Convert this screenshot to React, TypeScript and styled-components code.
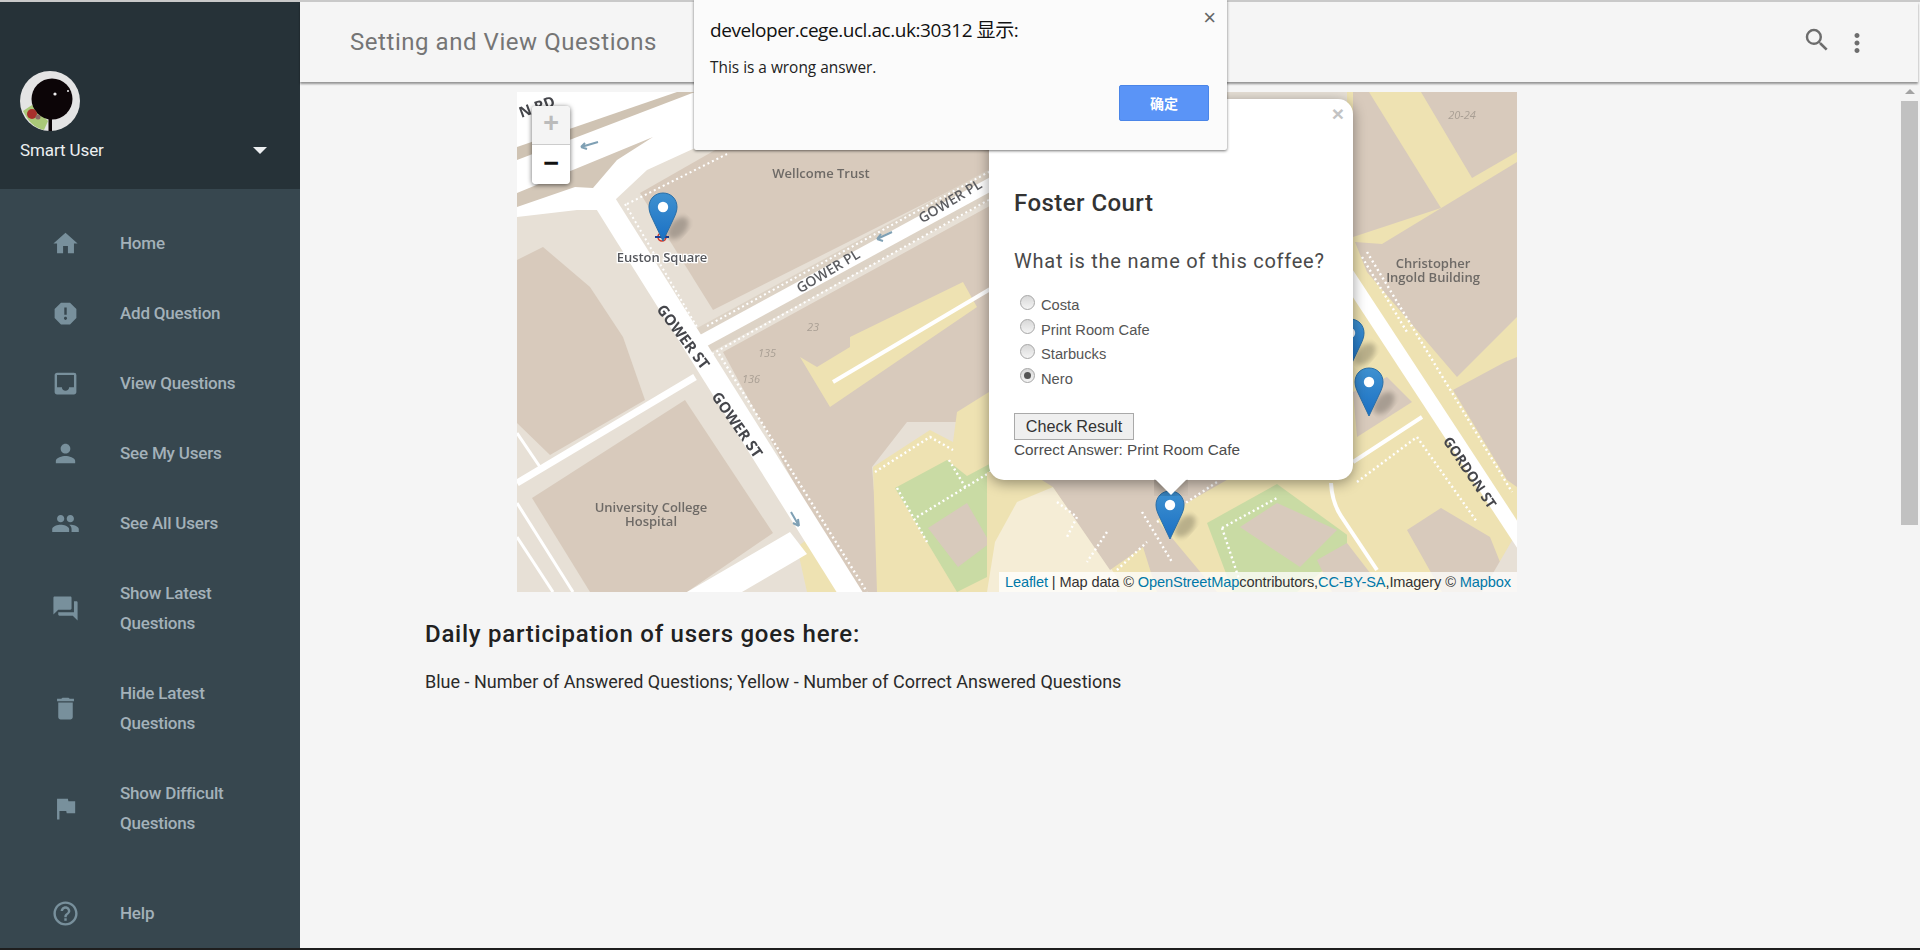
import React from "react";
import styled, { createGlobalStyle } from "styled-components";
import { MdHome, MdReport, MdInbox, MdPerson, MdPeople, MdForum, MdDelete, MdFlag, MdHelpOutline, MdSearch, MdMoreVert } from "react-icons/md";

const Global = createGlobalStyle`
  html, body { margin: 0; padding: 0; height: 950px; overflow: hidden; background: #f5f5f5; }
  * { box-sizing: border-box; }
  body { font-family: Roboto, "Noto Sans CJK SC", sans-serif; }
`;

const Page = styled.div`
  position: relative;
  height: 950px;
  display: flex;
  flex-direction: column;
  border-top: 2px solid #c9c9c9;
  border-bottom: 2px solid #1e1e1e;
`;
const Shell = styled.div`flex: 1; display: flex; min-height: 0;`;

const Sidebar = styled.aside`
  width: 300px;
  flex: none;
  display: flex;
  flex-direction: column;
  background: #37474f;
`;
const Account = styled.div`
  height: 189px;
  background: #263238;
  padding: 69px 20px 0;
  color: #eceff1;
`;
const Avatar = styled.svg`display: block; width: 60px; height: 60px;`;
const AccountRow = styled.div`
  display: flex;
  align-items: center;
  justify-content: space-between;
  height: 30px;
  margin-top: 4px;
  font-size: 17px;
  letter-spacing: -0.1px;
`;
const Caret = styled.span`
  width: 0; height: 0;
  margin-right: 13px;
  border-left: 7px solid transparent;
  border-right: 7px solid transparent;
  border-top: 7px solid #eceff1;
`;
const Nav = styled.nav`flex: 1; display: flex; flex-direction: column; padding-top: 19px;`;
const NavItem = styled.div<{ $gap?: number }>`
  display: flex;
  align-items: center;
  padding: 20px 40px 20px 51px;
  margin-top: ${(p) => p.$gap ?? 0}px;
  color: #a3b1b9;
  font-size: 17px;
  font-weight: 500;
  line-height: 30px;
  letter-spacing: -0.2px;
  svg { flex: none; width: 29px; height: 29px; color: #78909c; margin-right: 40px; }
`;

const Main = styled.div`flex: 1; min-width: 0; display: flex; flex-direction: column;`;
const Header = styled.header`
  position: relative;
  z-index: 1;
  height: 80px;
  flex: none;
  margin-right: 2px;
  display: flex;
  align-items: center;
  justify-content: space-between;
  padding: 0 47px 0 50px;
  background: #f5f5f5;
  box-shadow: 0 2px 2px rgba(0, 0, 0, 0.4);
`;
const Title = styled.h1`
  margin: 0;
  font-size: 24px;
  font-weight: 400;
  letter-spacing: 0.55px;
  color: #757575;
`;
const Tools = styled.div`
  display: flex;
  align-items: center;
  gap: 10px;
  color: #6d6d6d;
  margin-top: -4px;
  svg { display: block; width: 30px; height: 30px; }
`;
const Dots = styled.span`display: block; margin-top: 6px; margin-right: -1px;`;
const Body = styled.div`flex: 1; min-height: 0; display: flex;`;
const Content = styled.main`flex: 1; padding: 10px 0 0 125px; background: #f5f5f5;`;
const MapBox = styled.div`
  position: relative;
  width: 1000px;
  height: 500px;
  margin-left: 92px;
  overflow: hidden;
`;
const MapArt = styled.svg`display: block; width: 1000px; height: 500px; filter: blur(0.35px);`;
const Heading = styled.h2`
  margin: 27px 0 0;
  font-size: 24px;
  line-height: 30px;
  font-weight: 500;
  letter-spacing: 0.75px;
  color: #212121;
`;
const Para = styled.p`
  margin: 18px 0 0;
  font-size: 18px;
  line-height: 30px;
  color: #2a2a2a;
`;

const ScrollTrack = styled.div`
  width: 20px;
  flex: none;
  padding: 4px 2px 0 1px;
  background: #f4f4f4;
`;
const ScrollArrow = styled.div`
  width: 0; height: 0;
  margin: 3px auto 7px;
  border-left: 5px solid transparent;
  border-right: 5px solid transparent;
  border-bottom: 5px solid #a3a3a3;
`;
const ScrollThumb = styled.div`height: 424px; background: #c1c1c1;`;

const Zoom = styled.div`
  position: absolute;
  left: 15px;
  top: 14px;
  width: 38px;
  border-radius: 4px;
  overflow: hidden;
  box-shadow: 0 1px 5px rgba(0, 0, 0, 0.6);
`;
const ZoomBtn = styled.div<{ $off?: boolean }>`
  height: 39px;
  display: flex;
  align-items: center;
  justify-content: center;
  font-family: "Liberation Mono", monospace;
  font-weight: 700;
  font-size: 27px;
  color: ${(p) => (p.$off ? "#bbb" : "#111")};
  background: ${(p) => (p.$off ? "#f4f4f4" : "#fff")};
  border-bottom: ${(p) => (p.$off ? "1px solid #ccc" : "none")};
`;
const PinWrap = styled.svg<{ $x: number; $y: number }>`
  position: absolute;
  left: ${(p) => p.$x}px;
  top: ${(p) => p.$y}px;
  width: 62px;
  height: 52px;
  overflow: visible;
`;
const Attribution = styled.div`
  position: absolute;
  right: 0;
  bottom: 0;
  height: 20px;
  padding: 0 6px;
  display: flex;
  align-items: center;
  white-space: pre;
  background: rgba(255, 255, 255, 0.75);
  font-family: "Liberation Sans", sans-serif;
  font-size: 14.6px;
  letter-spacing: -0.12px;
  color: #333;
`;
const Link = styled.span`color: #0078a8;`;

const Popup = styled.div`
  position: absolute;
  left: 472px;
  top: 7px;
  width: 364px;
  height: 381px;
  padding: 89px 25px 0;
  background: #fff;
  border-radius: 15px;
  box-shadow: 0 3px 14px rgba(0, 0, 0, 0.4);
  color: #333;
`;
const PopupClose = styled.span`
  position: absolute;
  right: 9px;
  top: 3px;
  font-family: "Liberation Sans", sans-serif;
  font-weight: 700;
  font-size: 21px;
  color: #c3c3c3;
`;
const Tip = styled.span`
  position: absolute;
  left: 50%;
  bottom: -16px;
  width: 34px;
  height: 34px;
  margin-left: -17px;
  overflow: hidden;
  height: 17px;
  &::after {
    content: "";
    position: absolute;
    left: 5px;
    top: -13px;
    width: 24px;
    height: 24px;
    background: #fff;
    transform: rotate(45deg);
    box-shadow: 0 3px 14px rgba(0, 0, 0, 0.4);
  }
`;
const PlaceName = styled.h3`
  margin: 0;
  font-size: 24px;
  line-height: 30px;
  font-weight: 500;
  letter-spacing: 0.45px;
  color: #333;
`;
const Question = styled.p`
  margin: 28px 0 0;
  font-size: 20px;
  line-height: 30px;
  letter-spacing: 0.75px;
  color: #4a4a4a;
`;
const Options = styled.div`
  margin-top: 19px;
  display: flex;
  flex-direction: column;
  gap: 4.5px;
`;
const Option = styled.label`
  display: flex;
  align-items: center;
  height: 20px;
  padding-left: 6px;
  font-family: "Liberation Sans", sans-serif;
  font-size: 14.7px;
  color: #555;
`;
const Radio = styled.span<{ $on?: boolean }>`
  position: relative;
  top: -3px;
  flex: none;
  width: 15px;
  height: 15px;
  margin-right: 6px;
  border-radius: 50%;
  border: 1px solid #a6a6a6;
  background: linear-gradient(#d8d8d8, #f4f4f4);
  &::after {
    content: "";
    display: ${(p) => (p.$on ? "block" : "none")};
    width: 7px;
    height: 7px;
    margin: 3px;
    border-radius: 50%;
    background: #555;
  }
`;
const Check = styled.div`
  display: inline-block;
  margin-top: 24px;
  height: 27px;
  width: 120px;
  text-align: center;
  line-height: 25px;
  font-family: "Liberation Sans", sans-serif;
  font-size: 16.2px;
  color: #333;
  background: #efefef;
  border: 1px solid #a9a9a9;
`;
const Correct = styled.div`
  font-family: "Liberation Sans", sans-serif;
  font-size: 15.3px;
  line-height: 20px;
  color: #4d4d4d;
`;

const Dialog = styled.div`
  position: absolute;
  left: 694px;
  top: -2px;
  width: 533px;
  height: 150px;
  padding: 17px 16px 0;
  background: #fbfbfb;
  box-shadow: 0 1px 3px rgba(0, 0, 0, 0.55);
  border-radius: 0 0 2px 2px;
  z-index: 5;
`;
const DialogTitle = styled.div`
  font-family: "Open Sans", "Noto Sans CJK SC", sans-serif;
  font-size: 19px;
  line-height: 26px;
  letter-spacing: -0.45px;
  color: #111;
`;
const DialogText = styled.div`
  margin-top: 14px;
  font-family: "Open Sans", sans-serif;
  font-size: 15.4px;
  line-height: 22px;
  color: #222;
`;
const DialogClose = styled.span`
  position: absolute;
  right: 11px;
  top: 3px;
  font-family: "Liberation Sans", sans-serif;
  font-size: 22px;
  line-height: 30px;
  color: #666;
`;
const DialogActions = styled.div`display: flex; justify-content: flex-end; margin-top: 6px; padding-right: 2px;`;
const Confirm = styled.div`
  width: 90px;
  height: 36px;
  display: flex;
  align-items: center;
  justify-content: center;
  background: #5a94f7;
  border: 1px solid #4a85e8;
  border-radius: 2px;
  font-family: "Noto Sans CJK SC", sans-serif;
  font-weight: 700;
  font-size: 14px;
  color: #fff;
`;

const NAV = [
  { label: "Home", Icon: MdHome },
  { label: "Add Question", Icon: MdReport },
  { label: "View Questions", Icon: MdInbox },
  { label: "See My Users", Icon: MdPerson },
  { label: "See All Users", Icon: MdPeople },
  { label: "Show Latest Questions", Icon: MdForum },
  { label: "Hide Latest Questions", Icon: MdDelete },
  { label: "Show Difficult Questions", Icon: MdFlag },
  { label: "Help", Icon: MdHelpOutline, gap: 20 },
];

const OPTIONS = [
  { label: "Costa" },
  { label: "Print Room Cafe" },
  { label: "Starbucks" },
  { label: "Nero", on: true },
];

const PINS = [
  { x: 131, y: 100 },
  { x: 818, y: 226 },
  { x: 837, y: 275 },
  { x: 638, y: 398 },
];

const Pin = ({ x, y }: { x: number; y: number }) => (
  <PinWrap $x={x} $y={y} viewBox="0 0 62 52">
    <ellipse cx="30" cy="36" rx="8" ry="13" transform="rotate(42 30 36)" fill="#000" opacity="0.22" filter="url(#soft)" />
    <path
      d="M15 1C7 1 1 7 1 15c0 4 1.6 8 3.6 12L15 49l10.4-22c2-4 3.6-8 3.6-12C29 7 23 1 15 1z"
      fill="url(#pinFill)"
      stroke="#2a6fa8"
      strokeWidth="1"
    />
    <circle cx="15" cy="15" r="5.2" fill="#fff" />
  </PinWrap>
);

const TAN = "#d8cabc";
const PALE = "#e7e0d6";
const YEL = "#eee2b2";
const GRN = "#c9dba4";
const CREAM = "#f5edd6";

const MapDrawing = () => (
  <MapArt viewBox="0 0 1000 500">
    <defs>
      <filter id="soft"><feGaussianBlur stdDeviation="2.5" /></filter>
      <linearGradient id="pinFill" x1="0" y1="0" x2="0" y2="1">
        <stop offset="0" stopColor="#3f91d0" />
        <stop offset="1" stopColor="#1a70c4" />
      </linearGradient>
    </defs>
    <rect width="1000" height="500" fill={PALE} />
    {/* north-west roads */}
    <polygon points="0,0 300,0 130,78 98,108 84,118 60,118 0,125" fill="#fff" />
    <polygon points="0,55 160,0 178,0 0,68" fill="#cfc3b3" />
    <polygon points="0,101 136,45 100,68 76,96 58,95 0,115" fill="#d3c7b8" />
    {/* buildings left */}
    <polygon points="0,168 26,155 73,195 106,245 128,308 33,363 0,331" fill={TAN} />
    <polygon points="15,406 168,308 256,441 170,500 73,500" fill={TAN} />
    <polygon points="123,101 300,0 480,0 480,75 196,218" fill={TAN} />
    <polygon points="206,260 480,110 480,330 390,330 355,375 365,500 336,500" fill={TAN} />
    {/* yellow courts */}
    <polygon points="283,265 300,275 333,255 333,245 446,190 460,215 313,315" fill={YEL} />
    <polygon points="290,500 340,500 300,440 280,455" fill={YEL} />
    <polygon points="356,375 413,338 436,350 440,320 480,295 480,500 360,500" fill={YEL} />
    <polygon points="378,396 430,368 450,384 480,368 480,480 440,500 410,450" fill={GRN} />
    <polygon points="411,436 450,411 473,451 441,475" fill={TAN} />
    {/* gower st + pl */}
    <line x1="180" y1="252" x2="500" y2="78" stroke="#ddd3c6" strokeWidth="28" />
    <line x1="180" y1="252" x2="500" y2="78" stroke="#fff" strokeWidth="13" />
    <line x1="190" y1="234" x2="490" y2="70" stroke="#fff" strokeWidth="2" strokeDasharray="2 3" />
    <line x1="195" y1="262" x2="495" y2="95" stroke="#fff" strokeWidth="2" strokeDasharray="2 3" />
    <line x1="84" y1="104" x2="342" y2="515" stroke="#fff" strokeWidth="22" />
    <line x1="108" y1="112" x2="180" y2="235" stroke="#fff" strokeWidth="2" strokeDasharray="2 3" />
    <line x1="202" y1="262" x2="350" y2="500" stroke="#fff" strokeWidth="2.4" strokeDasharray="2 3" />
    <line x1="110" y1="112" x2="210" y2="62" stroke="#fff" strokeWidth="2" strokeDasharray="2 3" />
    <line x1="0" y1="391" x2="178" y2="285" stroke="#fff" strokeWidth="7" />
    <line x1="0" y1="341" x2="23" y2="375" stroke="#fff" strokeWidth="3" />
    <line x1="0" y1="411" x2="56" y2="500" stroke="#fff" strokeWidth="3" />
    <line x1="0" y1="445" x2="36" y2="500" stroke="#fff" strokeWidth="3" />
    <polygon points="170,500 273,440 290,462 225,500" fill="#fff" />
    <line x1="316" y1="290" x2="475" y2="196" stroke="#fff" strokeWidth="4" />
    <path d="M358 380L413 345L436 358M400 425L480 376M380 396L410 450M432 368L450 398" stroke="#fff" strokeWidth="2.4" strokeDasharray="2 3" fill="none" />
    {/* south centre */}
    <rect x="470" y="380" width="370" height="120" fill={YEL} />
    <polygon points="470,500 478,450 500,410 536,395 600,485 600,500" fill={CREAM} />
    <polygon points="520,385 715,385 640,428 700,500 640,500 626,455 593,478 536,395" fill={TAN} />
    <polygon points="690,431 760,392 840,450 780,500 716,500" fill={GRN} />
    <polygon points="723,435 760,411 820,438 783,475" fill={TAN} />
    <path d="M625 420l30 50M590 440l-20 30M540 410l20 15-10 20M705 436l55-30M705 436l20 60M640 430l60-40M600 478l30-28" stroke="#fff" strokeWidth="2.4" strokeDasharray="2 3" fill="none" />
    {/* east */}
    <rect x="830" y="0" width="170" height="500" fill={YEL} />
    <polygon points="836,0 852,0 924,116 836,145" fill={TAN} />
    <polygon points="904,0 1000,0 1000,60 955,86" fill={TAN} />
    <polygon points="838,150 865,152 1000,70 1000,225 940,285 850,180" fill={TAN} />
    <polygon points="936,298 988,270 1000,265 1000,395 990,388" fill={TAN} />
    <polygon points="836,300 870,285 895,310 840,345" fill={TAN} />
    <polygon points="890,438 924,416 973,445 995,500 925,500" fill={TAN} />
    <polygon points="800,468 830,451 860,490 840,500 815,500" fill={TAN} />
    <polygon points="1000,440 1000,500 965,500" fill={PALE} />
    <line x1="825" y1="175" x2="1015" y2="465" stroke="#fff" strokeWidth="15" />
    <line x1="836" y1="370" x2="905" y2="325" stroke="#fff" strokeWidth="4" />
    <path d="M814 391Q815 410 824 424L860 478" stroke="#fff" strokeWidth="4" fill="none" />
    <path d="M850 160L995 400M840 390L900 345L960 430M845 165L890 240" stroke="#fff" strokeWidth="2.4" strokeDasharray="2 3" fill="none" />

    <g fontFamily="'Open Sans', sans-serif" fontWeight="700" fontSize="15" fill="#45464b" textAnchor="middle">
      <text x="20" y="20" transform="rotate(-20 20 15)">N RD</text>
      <text x="166" y="250" transform="rotate(53 166 245)">GOWER ST</text>
      <text x="220" y="338" transform="rotate(55 220 333)">GOWER ST</text>
      <text x="952" y="385" fontSize="14" transform="rotate(56 952 381)">GORDON ST</text>
    </g>
    <g fontFamily="'Open Sans', sans-serif" fontWeight="600" fontSize="14" fill="#5b5c60" textAnchor="middle">
      <text x="311" y="184" transform="rotate(-31 311 179)">GOWER PL</text>
      <text x="433" y="114" transform="rotate(-31 433 109)">GOWER PL</text>
    </g>
    <g fontFamily="'Open Sans', sans-serif" fontWeight="600" fontSize="13" fill="#6e6a66" textAnchor="middle">
      <text x="304" y="86">Wellcome Trust</text>
      <text x="145" y="170" stroke="#fff" strokeWidth="2.5" paintOrder="stroke" fill="#55575c">Euston Square</text>
      <text x="134" y="420">University College</text>
      <text x="134" y="434">Hospital</text>
      <text x="916" y="176">Christopher</text>
      <text x="916" y="190">Ingold Building</text>
    </g>
    <g fontFamily="'Open Sans', sans-serif" fontStyle="italic" fontSize="11" fill="#a99f94" textAnchor="middle">
      <text x="296" y="239">23</text>
      <text x="250" y="265">135</text>
      <text x="234" y="291">136</text>
      <text x="945" y="27">20-24</text>
    </g>
    <g stroke="#7fa0b4" strokeWidth="2" fill="none">
      <path d="M64 55l17-5M64 55l6 2M64 55l4-4" />
      <path d="M360 147l15-7M360 147l6 2M360 147l4-5" />
      <path d="M274 420l8 14M282 434l-1-7M282 434l-6-3" />
    </g>
    <circle cx="145" cy="145" r="4" fill="none" stroke="#d33a2c" strokeWidth="1.6" />
    <rect x="138" y="144" width="14" height="2" fill="#1c3f94" />
  </MapArt>
);

export default function App() {
  return (
    <Page>
      <Global />
      <Shell>
        <Sidebar>
          <Account>
            <Avatar viewBox="0 0 60 60">
              <circle cx="30" cy="30" r="30" fill="#e4e4e4" />
              <path d="M3 40C8 50 14 57 24 59L28 50L12 34z" fill="#a9c878" />
              <circle cx="32" cy="28" r="20.5" fill="#0c0507" />
              <rect x="28.5" y="45" width="3.5" height="15" fill="#0c0507" />
              <circle cx="35" cy="23" r="1.6" fill="#eee" />
              <circle cx="48" cy="20" r="1" fill="#eee" />
              <circle cx="12" cy="43" r="5" fill="#a8302c" />
              <circle cx="18" cy="46" r="2.5" fill="#8a6a66" />
            </Avatar>
            <AccountRow>
              Smart User
              <Caret />
            </AccountRow>
          </Account>
          <Nav>
            {NAV.map(({ label, Icon, gap }) => (
              <NavItem key={label} $gap={gap}>
                <Icon />
                <span>{label}</span>
              </NavItem>
            ))}
          </Nav>
        </Sidebar>
        <Main>
          <Header>
            <Title>Setting and View Questions</Title>
            <Tools>
              <MdSearch />
              <Dots><MdMoreVert /></Dots>
            </Tools>
          </Header>
          <Body>
            <Content>
              <MapBox>
                <MapDrawing />
                {PINS.map((p) => (
                  <Pin key={p.x} x={p.x} y={p.y} />
                ))}
                <Zoom>
                  <ZoomBtn $off>+</ZoomBtn>
                  <ZoomBtn>−</ZoomBtn>
                </Zoom>
                <Popup>
                  <PopupClose>×</PopupClose>
                  <PlaceName>Foster Court</PlaceName>
                  <Question>What is the name of this coffee?</Question>
                  <Options>
                    {OPTIONS.map((o) => (
                      <Option key={o.label}>
                        <Radio $on={o.on} />
                        {o.label}
                      </Option>
                    ))}
                  </Options>
                  <Check>Check Result</Check>
                  <Correct>Correct Answer: Print Room Cafe</Correct>
                  <Tip />
                </Popup>
                <Attribution>
                  <Link>Leaflet</Link> | Map data © <Link>OpenStreetMap</Link>contributors,<Link>CC-BY-SA</Link>,Imagery © <Link>Mapbox</Link>
                </Attribution>
              </MapBox>
              <Heading>Daily participation of users goes here:</Heading>
              <Para>Blue - Number of Answered Questions; Yellow - Number of Correct Answered Questions</Para>
            </Content>
            <ScrollTrack>
              <ScrollArrow />
              <ScrollThumb />
            </ScrollTrack>
          </Body>
        </Main>
      </Shell>
      <Dialog>
        <DialogClose>×</DialogClose>
        <DialogTitle>developer.cege.ucl.ac.uk:30312 显示:</DialogTitle>
        <DialogText>This is a wrong answer.</DialogText>
        <DialogActions>
          <Confirm>确定</Confirm>
        </DialogActions>
      </Dialog>
    </Page>
  );
}
